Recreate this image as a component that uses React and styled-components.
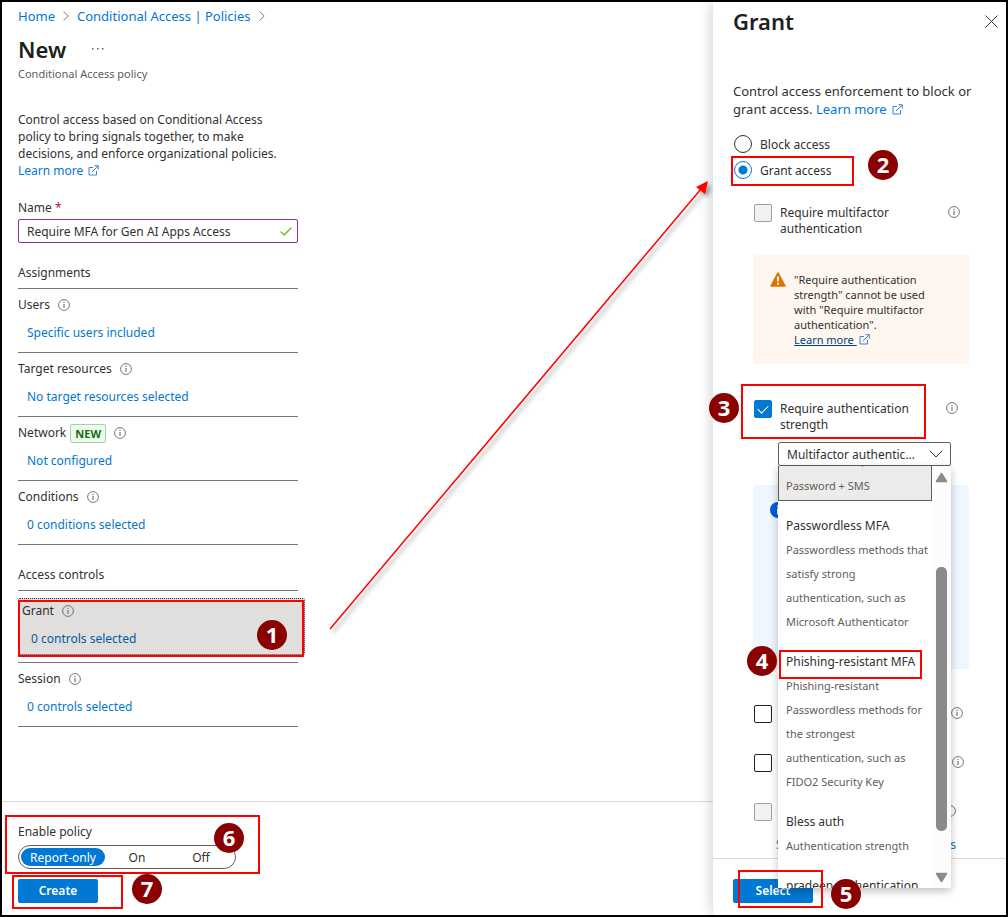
import React, { useState, useRef, useLayoutEffect } from "react";
import styled, { createGlobalStyle, css } from "styled-components";

const strengths = [
  {
    name: "Multifactor authentication",
    lines: [
      "Combinations of methods",
      "that satisfy strong",
      "authentication, such as",
      "Password + SMS"
    ]
  },
  {
    name: "Passwordless MFA",
    lines: [
      "Passwordless methods that",
      "satisfy strong",
      "authentication, such as",
      "Microsoft Authenticator"
    ]
  },
  {
    name: "Phishing-resistant MFA",
    lines: [
      "Phishing-resistant",
      "Passwordless methods for",
      "the strongest",
      "authentication, such as",
      "FIDO2 Security Key"
    ]
  },
  { name: "Bless auth", lines: ["Authentication strength"] },
  { name: "pradeep authentication", lines: [] }
];

const assignments = [
  { label: "Users", value: "Specific users included" },
  { label: "Target resources", value: "No target resources selected" },
  { label: "Network", value: "Not configured", isNew: true },
  { label: "Conditions", value: "0 conditions selected" }
];

function InfoIcon() {
  return (
    <Icon width="12" height="12" viewBox="0 0 12 12">
      <circle cx="6" cy="6" r="5.4" fill="none" stroke="#797775" />
      <rect x="5.4" y="5" width="1.2" height="4" fill="#797775" />
      <rect x="5.4" y="2.8" width="1.2" height="1.3" fill="#797775" />
    </Icon>
  );
}

function ExternalIcon() {
  return (
    <ExtIcon width="11" height="11" viewBox="0 0 11 11" fill="none">
      <path
        d="M5 2.5H1v7.5h7.5V6M4 7l6-6M6.5 .7h3.8v3.8"
        stroke="#3b82d6"
      />
    </ExtIcon>
  );
}

function Chevron() {
  return (
    <Icon width="6" height="10" viewBox="0 0 6 10" fill="none">
      <path d="M.7 .5L5.2 5 .7 9.5" stroke="#797775" />
    </Icon>
  );
}

function SettingItem({ label, value, isNew }) {
  return (
    <Setting>
      <SettingLabel>
        {label}
        {isNew && <NewTag>NEW</NewTag>}
        <InfoIcon />
      </SettingLabel>
      <SettingLink href="#">{value}</SettingLink>
    </Setting>
  );
}

function StrengthSelect() {
  const [strength, setStrength] = useState(strengths[0].name);
  const list = useRef(null);

  useLayoutEffect(() => {
    list.current.scrollTop = 101;
  }, []);

  return (
    <SelectWrap>
      <SelectBox
        aria-label="Authentication strength"
        value={strength}
        onChange={e => setStrength(e.target.value)}
      >
        {strengths.map(s => (
          <option key={s.name} value={s.name}>
            {s.name === "Multifactor authentication"
              ? "Multifactor authentic..."
              : s.name}
          </option>
        ))}
      </SelectBox>
      <SelectArrow width="14" height="8" viewBox="0 0 14 8" fill="none">
        <path d="M.7 .7L7 7 13.3 .7" stroke="#323130" />
      </SelectArrow>
      <Menu>
        <OptionList role="listbox" ref={list}>
          {strengths.map(s => (
            <Option
              key={s.name}
              role="option"
              aria-selected={s.name === strength}
              $selected={s.name === strength}
              onClick={() => setStrength(s.name)}
            >
              <OptionName>{s.name}</OptionName>
              {s.lines.map(line => (
                <OptionText key={line}>{line}</OptionText>
              ))}
            </Option>
          ))}
        </OptionList>
        <ScrollTrack>
          <svg width="13" height="11" viewBox="0 0 13 11">
            <path
              d="M6.5 1.5L11.5 9.5H1.5z"
              fill="#8a8a8a"
              stroke="#8a8a8a"
              strokeWidth="1.6"
              strokeLinejoin="round"
            />
          </svg>
          <ScrollThumb />
          <svg width="13" height="11" viewBox="0 0 13 11">
            <path
              d="M6.5 9.5L11.5 1.5H1.5z"
              fill="#8a8a8a"
              stroke="#8a8a8a"
              strokeWidth="1.6"
              strokeLinejoin="round"
            />
          </svg>
        </ScrollTrack>
        <Outline $left={1} $top={184} $width={143} $height={29} />
        <Badge $left={-31} $top={180}>4</Badge>
      </Menu>
    </SelectWrap>
  );
}

function GrantPanel() {
  const [access, setAccess] = useState("grant");
  const [strengthOn, setStrengthOn] = useState(true);

  return (
    <Panel>
      <PanelHeader>
        <Title>Grant</Title>
        <CloseButton type="button" aria-label="Close">
          <svg width="13" height="13" viewBox="0 0 13 13">
            <path d="M.5 .5l12 12M12.5 .5l-12 12" stroke="#323130" />
          </svg>
        </CloseButton>
      </PanelHeader>
      <PanelBody>
        <PanelIntro>
          Control access enforcement to block or grant access.{" "}
          <Link href="#">
            Learn more <ExternalIcon />
          </Link>
        </PanelIntro>
        <Radios>
          <RadioLabel>
            <Radio
              type="radio"
              name="access"
              checked={access === "block"}
              onChange={() => setAccess("block")}
            />
            <LabelText>Block access</LabelText>
          </RadioLabel>
          <RadioLabel>
            <Radio
              type="radio"
              name="access"
              checked={access === "grant"}
              onChange={() => setAccess("grant")}
            />
            <LabelText>Grant access</LabelText>
            <Outline $left={-2} $top={-1} $width={123} $height={30} />
            <Badge $left={135} $top={-7}>2</Badge>
          </RadioLabel>
        </Radios>
        <Controls>
          <CheckRow>
            <CheckLabel $width={194}>
              <CheckBox type="checkbox" disabled />
              <LabelText>
                Require multifactor
                <br />
                authentication
              </LabelText>
            </CheckLabel>
            <InfoIcon />
          </CheckRow>
          <Warning>
            <svg width="16" height="15" viewBox="0 0 16 15">
              <path
                d="M8 .9L15.1 14H.9z"
                fill="#db7500"
                stroke="#db7500"
                strokeWidth="1.4"
                strokeLinejoin="round"
              />
              <rect x="7.1" y="4.5" width="1.8" height="5" fill="#fff" />
              <rect x="7.1" y="10.8" width="1.8" height="1.8" fill="#fff" />
            </svg>
            <div>
              "Require authentication strength" cannot be used with "Require
              multifactor authentication".
              <br />
              <WarningLink href="#">
                Learn more <ExternalIcon />
              </WarningLink>
            </div>
          </Warning>
          <CheckRow>
            <CheckLabel $width={192}>
              <CheckBox
                type="checkbox"
                checked={strengthOn}
                onChange={e => setStrengthOn(e.target.checked)}
              />
              <LabelText>
                Require authentication
                <br />
                strength
              </LabelText>
            </CheckLabel>
            <InfoIcon />
            <Outline $left={-12} $top={-16} $width={185} $height={55} />
            <Badge $left={-44} $top={-7}>3</Badge>
          </CheckRow>
          <StrengthSelect />
          <InfoBox>
            <svg width="16" height="16" viewBox="0 0 16 16">
              <circle cx="8" cy="8" r="8" fill="#015cda" />
              <rect x="7" y="6.5" width="2" height="6" fill="#fff" />
              <rect x="7" y="3.4" width="2" height="2" fill="#fff" />
            </svg>
          </InfoBox>
          <MoreChecks>
            <CheckRow>
              <CheckLabel $width={197}>
                <CheckBox type="checkbox" aria-label="Compliant device" />
              </CheckLabel>
              <InfoIcon />
            </CheckRow>
            <CheckRow>
              <CheckLabel $width={198}>
                <CheckBox type="checkbox" aria-label="Hybrid joined device" />
              </CheckLabel>
              <InfoIcon />
            </CheckRow>
            <CheckRow>
              <CheckLabel $width={190}>
                <CheckBox
                  type="checkbox"
                  aria-label="Approved client app"
                  disabled
                />
              </CheckLabel>
              <InfoIcon />
            </CheckRow>
          </MoreChecks>
          <AppsLink href="#">
            <span>See list of approved client</span>
            <span>apps</span>
          </AppsLink>
        </Controls>
      </PanelBody>
      <PanelFooter>
        <Button type="button">Select</Button>
        <Outline $left={25} $top={11} $width={85} $height={38} />
        <Badge $left={118} $top={20}>5</Badge>
      </PanelFooter>
    </Panel>
  );
}

function App() {
  const [name, setName] = useState("Require MFA for Gen AI Apps Access");
  const [state, setState] = useState("Report-only");

  return (
    <Page>
      <GlobalStyle />
      <Main>
        <Content>
          <Breadcrumb>
            <Link href="#">Home</Link>
            <Chevron />
            <Link href="#">Conditional Access | Policies</Link>
            <Chevron />
          </Breadcrumb>
          <TitleRow>
            <Title>New</Title>
            <MoreButton type="button" aria-label="More">
              <svg width="12" height="2" viewBox="0 0 12 2" fill="#605e5c">
                <rect x="0" width="1.5" height="1.5" />
                <rect x="5" width="1.5" height="1.5" />
                <rect x="10" width="1.5" height="1.5" />
              </svg>
            </MoreButton>
          </TitleRow>
          <Subtitle>Conditional Access policy</Subtitle>
          <Column>
            <Intro>
              Control access based on Conditional Access
              <br />
              policy to bring signals together, to make
              <br />
              decisions, and enforce organizational policies.
              <br />
              <Link href="#">
                Learn more <ExternalIcon />
              </Link>
            </Intro>
            <NameLabel htmlFor="name">
              Name <Required>*</Required>
            </NameLabel>
            <NameField>
              <NameInput
                id="name"
                type="text"
                value={name}
                onChange={e => setName(e.target.value)}
              />
              <svg width="12" height="9" viewBox="0 0 12 9" fill="none">
                <path
                  d="M.6 4.6L4.2 8 11.4 .7"
                  stroke="#5db300"
                  strokeWidth="1.2"
                />
              </svg>
            </NameField>
            <SectionTitle>Assignments</SectionTitle>
            {assignments.map(item => (
              <SettingItem key={item.label} {...item} />
            ))}
            <SectionTitle>Access controls</SectionTitle>
            <GrantSetting>
              <GrantActive>
                <SettingLabel>
                  Grant
                  <InfoIcon />
                </SettingLabel>
                <SettingLink href="#">0 controls selected</SettingLink>
                <Outline $left={-1} $top={1} $width={286} $height={57} />
                <Badge $left={238} $top={21}>1</Badge>
              </GrantActive>
            </GrantSetting>
            <SettingItem label="Session" value="0 controls selected" />
          </Column>
        </Content>
        <Footer>
          <Toggle>
            <legend>Enable policy</legend>
            <ToggleOptions>
              {["Report-only", "On", "Off"].map(option => (
                <ToggleOption key={option} $active={state === option}>
                  <input
                    type="radio"
                    name="state"
                    checked={state === option}
                    onChange={() => setState(option)}
                  />
                  {option}
                </ToggleOption>
              ))}
            </ToggleOptions>
          </Toggle>
          <Button type="button">Create</Button>
          <Outline $left={3} $top={13} $width={255} $height={59} />
          <Badge $left={212} $top={21}>6</Badge>
          <Outline $left={10} $top={73} $width={111} $height={34} />
          <Badge $left={130} $top={72}>7</Badge>
        </Footer>
        <Arrow width="396" height="468" viewBox="0 0 396 468">
          <path d="M1 449L372 9" stroke="#f00" strokeWidth="1.5" />
          <path d="M379 1L376 14 367 7z" fill="#f00" />
        </Arrow>
      </Main>
      <GrantPanel />
    </Page>
  );
}

export default App;

const GlobalStyle = createGlobalStyle`
  * {
    box-sizing: border-box;
  }

  body {
    margin: 0;
    background: #fff;
    color: #323130;
    font-family: "Noto Sans", "Open Sans", sans-serif;
    font-size: 12px;
    line-height: 18px;
  }

  button, input, select {
    font: inherit;
    color: inherit;
  }
`;

const Page = styled.div`
  display: flex;
  min-height: 100vh;
  border: 2px solid #000;
`;

const Main = styled.main`
  position: relative;
  display: flex;
  flex: 1;
  flex-direction: column;
  min-width: 0;
`;

const Content = styled.div`
  flex: 1;
  padding: 5px 16px 0;
`;

const Column = styled.div`
  width: 280px;
`;

const Icon = styled.svg`
  flex: none;
`;

const ExtIcon = styled.svg`
  margin-left: 2px;
  vertical-align: -1px;
`;

const Link = styled.a`
  color: #0078d4;
  text-decoration: none;
`;

const Breadcrumb = styled.nav`
  display: flex;
  align-items: center;
  gap: 8px;
  font-size: 13px;
`;

const TitleRow = styled.div`
  display: flex;
  align-items: center;
  gap: 26px;
  margin-top: 8px;
`;

const Title = styled.h1`
  margin: 0;
  font-size: 22px;
  font-weight: 600;
  line-height: 32px;
  color: #201f1e;
`;

const MoreButton = styled.button`
  display: flex;
  padding: 0;
  border: none;
  background: none;
`;

const Subtitle = styled.div`
  font-size: 11px;
  color: #605e5c;
`;

const Intro = styled.p`
  margin: 28px 0 0;
  line-height: 17px;
  white-space: nowrap;
`;

const NameLabel = styled.label`
  display: block;
  margin-top: 20px;
`;

const Required = styled.span`
  color: #a4262c;
`;

const NameField = styled.div`
  display: flex;
  align-items: center;
  height: 24px;
  margin-top: 2px;
  padding: 0 5px 0 8px;
  border: 1px solid #8a2da5;
  border-radius: 2px;
`;

const NameInput = styled.input`
  flex: 1;
  min-width: 0;
  padding: 1px 0 0;
  border: none;
  outline: none;
  background: none;
`;

const SectionTitle = styled.h2`
  margin: 21px 0 0;
  padding-bottom: 6px;
  border-bottom: 1px solid #797775;
  font-size: 12px;
  font-weight: 400;
`;

const Setting = styled.div`
  padding: 7px 0 10px;
  border-bottom: 1px solid #797775;
`;

const SettingLabel = styled.div`
  display: flex;
  align-items: center;
  gap: 8px;
  height: 18px;
`;

const SettingLink = styled(Link)`
  display: block;
  margin: 10px 0 0 9px;
`;

const NewTag = styled.span`
  margin-left: -4px;
  padding: 0 4px;
  border: 1px solid #9fd89f;
  border-radius: 2px;
  background: #f1faf1;
  color: #0e700e;
  font-size: 11px;
  font-weight: 700;
  line-height: 17px;
`;

const GrantSetting = styled.div`
  padding: 7px 0;
  border-bottom: 1px solid #797775;
`;

const GrantActive = styled.div`
  position: relative;
  height: 57px;
  margin-right: -7px;
  padding: 3px;
  border: 1px dotted #323130;
  border-radius: 2px;
  background: #e1dfdd;

  a {
    color: #005a9e;
  }
`;

const Footer = styled.footer`
  position: relative;
  padding: 21px 16px 12px;
  border-top: 1px solid #d9d9d9;
`;

const Toggle = styled.fieldset`
  margin: 0 0 10px;
  padding: 0;
  border: none;

  legend {
    padding: 0;
  }
`;

const ToggleOptions = styled.div`
  display: flex;
  width: 218px;
  height: 24px;
  margin-top: 4px;
  padding: 2px;
  border: 1px solid #605e5c;
  border-radius: 12px;
`;

const ToggleOption = styled.label`
  flex: 1;
  border-radius: 9px;
  line-height: 19px;
  text-align: center;

  input {
    position: absolute;
    opacity: 0;
  }

  ${props =>
    props.$active &&
    css`
      flex: none;
      width: 84px;
      background: #0078d4;
      color: #fff;
    `}
`;

const Button = styled.button`
  width: 80px;
  height: 24px;
  padding: 0;
  border: none;
  border-radius: 2px;
  background: #0078d4;
  color: #fff;
  font-weight: 600;
`;

const Arrow = styled.svg`
  position: absolute;
  top: 178px;
  left: 327px;
  z-index: 6;
  filter: drop-shadow(3px 3px 2px rgba(0, 0, 0, 0.4));
  pointer-events: none;
`;

const Outline = styled.span`
  position: absolute;
  top: ${props => props.$top}px;
  left: ${props => props.$left}px;
  z-index: 5;
  width: ${props => props.$width}px;
  height: ${props => props.$height}px;
  border: 2px solid #f00;
  pointer-events: none;
`;

const Badge = styled.span`
  position: absolute;
  top: ${props => props.$top}px;
  left: ${props => props.$left}px;
  z-index: 6;
  width: 30px;
  height: 30px;
  border-radius: 50%;
  background: #8b0000;
  color: #fff;
  font-family: "Open Sans", sans-serif;
  font-size: 22px;
  font-weight: 700;
  line-height: 28px;
  text-align: center;
`;

const Panel = styled.aside`
  position: relative;
  display: flex;
  flex: none;
  flex-direction: column;
  width: 293px;
  background: #fff;
  box-shadow: 0 0 14px rgba(0, 0, 0, 0.22);
`;

const PanelHeader = styled.header`
  display: flex;
  align-items: center;
  justify-content: space-between;
  padding: 3px 8px 0 20px;
`;

const CloseButton = styled.button`
  display: flex;
  padding: 0;
  border: none;
  background: none;
`;

const PanelBody = styled.div`
  flex: 1;
  padding: 45px 20px 4px;
`;

const PanelIntro = styled.p`
  margin: 0;
  font-size: 13px;
`;

const Radios = styled.div`
  margin-top: 13px;
`;

const RadioLabel = styled.label`
  position: relative;
  display: flex;
  align-items: center;
  gap: 8px;
  height: 26px;
`;

const LabelText = styled.span`
  padding-top: 1px;
`;

const Radio = styled.input`
  appearance: none;
  flex: none;
  width: 18px;
  height: 18px;
  margin: 0 0 0 1px;
  border: 1px solid #323130;
  border-radius: 50%;

  &:checked {
    border-color: #0078d4;
    background: radial-gradient(#0078d4 4px, #fff 5px);
  }
`;

const Controls = styled.div`
  padding: 21px 0 0 20px;
`;

const CheckRow = styled.div`
  position: relative;
  display: flex;
  align-items: flex-start;
  padding-left: 1px;

  > svg {
    margin-top: 2px;
  }
`;

const CheckLabel = styled.label`
  display: flex;
  flex: none;
  gap: 8px;
  width: ${props => props.$width}px;
  line-height: 16px;
`;

const CheckBox = styled.input`
  appearance: none;
  flex: none;
  width: 18px;
  height: 18px;
  margin: 0;
  border: 1px solid #201f1e;
  border-radius: 2px;

  &:disabled {
    border-color: #a19f9d;
    background: #f3f2f1;
  }

  &:checked {
    border-color: #0078d4;
    background: #0078d4;
  }

  &:checked::after {
    content: "";
    display: block;
    width: 9px;
    height: 5px;
    margin: 4px 0 0 3px;
    border: solid #fff;
    border-width: 0 0 1px 1px;
    transform: rotate(-45deg);
  }
`;

const Warning = styled.div`
  display: flex;
  gap: 8px;
  width: 216px;
  margin: 18px 0 36px;
  padding: 17px 30px 17px 17px;
  border-radius: 2px;
  background: #fff6f0;
  font-size: 11px;
  line-height: 15px;

  > svg {
    flex: none;
  }
`;

const WarningLink = styled.a`
  color: #004578;
`;

const SelectWrap = styled.div`
  position: relative;
  width: 173px;
  margin: 9px 0 0 25px;
`;

const SelectBox = styled.select`
  appearance: none;
  display: block;
  width: 100%;
  height: 24px;
  padding: 1px 28px 0 8px;
  border: 1px solid #605e5c;
  border-radius: 2px;
  background: #fff;
`;

const SelectArrow = styled.svg`
  position: absolute;
  top: 8px;
  right: 8px;
  pointer-events: none;
`;

const Menu = styled.div`
  position: absolute;
  top: 24px;
  left: 0;
  z-index: 3;
  display: flex;
  width: 100%;
  height: 422px;
  background: #fff;
  box-shadow: 0 3px 8px rgba(0, 0, 0, 0.25);
`;

const OptionList = styled.ul`
  flex: 1;
  height: 100%;
  margin: 0;
  padding: 0;
  overflow: hidden;
  list-style: none;
  white-space: nowrap;
`;

const Option = styled.li`
  padding: 13px 0 3px 8px;
  line-height: 24px;

  ${props =>
    props.$selected &&
    css`
      padding: 12px 0 2px 7px;
      border: 1px solid #605e5c;
      background: #edebe9;
    `}
`;

const OptionName = styled.div`
  font-size: 12px;
`;

const OptionText = styled.div`
  font-size: 11px;
  color: #605e5c;
`;

const ScrollTrack = styled.div`
  display: flex;
  flex-direction: column;
  align-items: center;
  justify-content: space-between;
  width: 19px;
  padding: 6px 0 5px;
  background: #fcfcfc;
`;

const ScrollThumb = styled.div`
  width: 11px;
  height: 264px;
  margin-top: 42px;
  border-radius: 5px;
  background: #8a8a8a;
`;

const InfoBox = styled.div`
  width: 216px;
  height: 184px;
  margin-top: 19px;
  padding: 17px;
  border-radius: 2px;
  background: #eff6ff;
`;

const MoreChecks = styled.div`
  display: grid;
  gap: 31px;
  margin-top: 36px;
`;

const AppsLink = styled(Link)`
  display: flex;
  justify-content: space-between;
  width: 180px;
  margin: 15px 0 0 23px;
  white-space: nowrap;
`;

const PanelFooter = styled.footer`
  position: relative;
  padding: 20px 20px 12px;
  border-top: 1px solid #d9d9d9;
`;
